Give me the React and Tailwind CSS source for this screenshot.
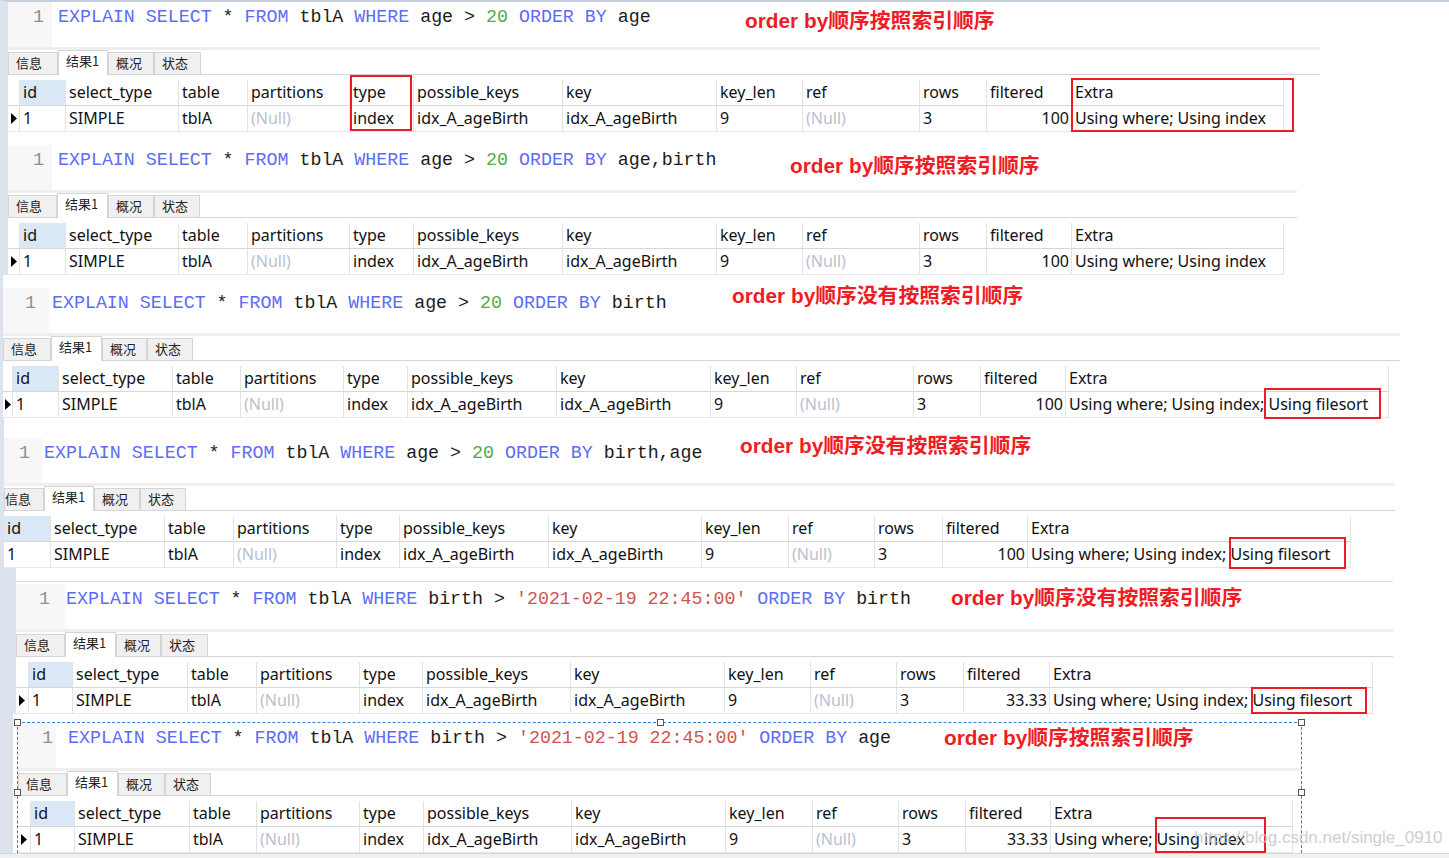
import React from 'react';

const KW = new Set(['EXPLAIN', 'SELECT', 'FROM', 'WHERE', 'ORDER', 'BY']);
const HEAD = ['id', 'select_type', 'table', 'partitions', 'type', 'possible_keys', 'key', 'key_len', 'ref', 'rows', 'filtered', 'Extra'];
const TABS = ['信息', '结果1', '概况', '状态'];

function SqlLine({ text }) {
  const parts = text.match(/'[^']*'|[A-Za-z_]+|\d+|\s+|./g);
  return parts.map((p, i) => {
    let c = 'text-[#1c1c1c]';
    if (KW.has(p)) c = 'text-[#5d6cf6]';
    else if (/^\d+$/.test(p)) c = 'text-[#52a94c]';
    else if (p[0] === "'") c = 'text-[#cf5450]';
    return <span key={i} className={c}>{p}</span>;
  });
}

function Grid({ cols, indicator, filtered, extra }) {
  const w = cols.split(' ');
  const ind = indicator ? w.shift() : null;
  const values = ['1', 'SIMPLE', 'tblA', null, 'index', 'idx_A_ageBirth', 'idx_A_ageBirth', '9', null, '3', filtered, extra];
  const cell = 'shrink-0 border-r border-b border-r-[#e3e3e3] whitespace-nowrap';
  return (
    <div className="font-['Noto_Sans',sans-serif] text-[16px] text-[#111]">
      <div className="flex h-[26px]">
        {ind && <div className={`${ind} ${cell} border-b-[#d6d6d6]`} />}
        {HEAD.map((h, i) => (
          <div key={h} className={`${w[i]} ${cell} border-b-[#d6d6d6] pl-[3px] leading-[25px] ${i === 0 ? 'bg-[#d9e7f6]' : ''}`}>
            {h}
          </div>
        ))}
      </div>
      <div className="flex h-[26px]">
        {ind && (
          <div className={`${ind} ${cell} border-b-[#e8e8e8] flex items-center justify-center`}>
            <svg width="6" height="11" viewBox="0 0 6 11">
              <polygon points="0,0 6,5.5 0,11" fill="#000" />
            </svg>
          </div>
        )}
        {values.map((v, i) => (
          <div
            key={i}
            className={`${w[i]} ${cell} border-b-[#e8e8e8] leading-[25px] ${i === 10 ? 'text-right pr-[2px]' : 'pl-[3px]'} ${v === null ? 'text-[#b8c1d1]' : ''}`}
          >
            {v === null ? '(Null)' : v}
          </div>
        ))}
      </div>
    </div>
  );
}

function Block({ outer, inner = '', gutter, numPr, codeMl, code, note, noteText, tabs, sep, cols, indicator = true, filtered, extra, boxes = [], children }) {
  const tw = tabs.split(' ');
  return (
    <div className={outer}>
      <div className={`relative ${inner}`}>
        <div className="flex h-[45px] font-['Liberation_Mono',monospace] text-[18.3px] leading-[24px]">
          <div className={`${gutter} ${numPr} shrink-0 bg-[#f7f7f7] pt-[3px] text-right text-[#8f8f8f]`}>1</div>
          <div className={`${codeMl} pt-[3px] whitespace-pre`}>
            <SqlLine text={code} />
          </div>
        </div>
        <div className={`${sep} h-[3px] bg-[#efefef]`} />
        <div className={`${sep} flex h-[25px] items-end border-b border-[#d5d5d5] font-['Noto_Sans_CJK_SC',sans-serif] text-[13px] text-[#222]`}>
          {TABS.map((t, i) =>
            i === 1 ? (
              <div key={t} className={`${tw[i]} -mb-px h-[25px] shrink-0 border-x border-t border-[#d5d5d5] bg-white pl-[7px] leading-[20px]`}>
                {t}
              </div>
            ) : (
              <div key={t} className={`${tw[i]} h-[22px] shrink-0 overflow-hidden border-x border-t border-[#d5d5d5] bg-[#f0f0f0] ${i === 0 && !indicator ? 'pl-0' : 'pl-[7px]'} leading-[19px]`}>
                {t}
              </div>
            )
          )}
        </div>
        <div className="h-[5px]" />
        <Grid cols={cols} indicator={indicator} filtered={filtered} extra={extra} />
        <div className={`absolute ${note} whitespace-nowrap font-['Liberation_Sans','Noto_Sans_CJK_SC',sans-serif] text-[20.8px] font-bold leading-[28px] text-[#ef1c25]`}>
          {noteText}
        </div>
        {boxes.map((b) => (
          <div key={b} className={`absolute ${b} border-2 border-[#ec1c24]`} />
        ))}
        {children}
      </div>
    </div>
  );
}

const Q1 = 'EXPLAIN SELECT * FROM tblA WHERE age > 20 ORDER BY ';
const Q2 = "EXPLAIN SELECT * FROM tblA WHERE birth > '2021-02-19 22:45:00' ORDER BY ";
const YES = 'order by顺序按照索引顺序';
const NO = 'order by顺序没有按照索引顺序';
const E2 = 'Using where; Using index';
const E3 = 'Using where; Using index; Using filesort';

function Handle({ pos }) {
  return <div className={`absolute ${pos} h-[7px] w-[7px] border border-[#555] bg-white`} />;
}

export default function App() {
  return (
    <div className="h-[858px] w-[1449px] overflow-hidden bg-white">
      <Block
        outer="border-l-[8px] border-t-2 border-l-[#dce3ec] border-t-[#c5cedb]"
        gutter="w-[44px]"
        numPr="pr-[8px]"
        codeMl="ml-[6px]"
        code={Q1 + 'age'}
        note="left-[737px] top-[5px]"
        noteText={YES}
        tabs="w-[50px] w-[50px] w-[46px] w-[47px]"
        sep="w-[1312px]"
        cols="w-[12px] w-[46px] w-[113px] w-[69px] w-[102px] w-[64px] w-[149px] w-[154px] w-[86px] w-[117px] w-[67px] w-[85px] w-[212px]"
        filtered="100"
        extra={E2}
        boxes={['left-[342px] top-[73px] w-[62px] h-[56px]', 'left-[1063px] top-[76px] w-[223px] h-[54px]']}
      />
      <Block
        outer="border-l-[8px] border-l-[#dce3ec] pt-[13px]"
        gutter="w-[44px]"
        numPr="pr-[8px]"
        codeMl="ml-[6px]"
        code={Q1 + 'age,birth'}
        note="left-[782px] top-[7px]"
        noteText={YES}
        tabs="w-[49px] w-[51px] w-[46px] w-[46px]"
        sep="w-[1289px]"
        cols="w-[12px] w-[46px] w-[113px] w-[69px] w-[102px] w-[64px] w-[149px] w-[154px] w-[86px] w-[117px] w-[67px] w-[85px] w-[212px]"
        filtered="100"
        extra={E2}
      />
      <Block
        outer="border-l-[3px] border-l-[#dce3ec] pt-[13px]"
        gutter="w-[46px]"
        numPr="pr-[13px]"
        codeMl="ml-[3px]"
        code={Q1 + 'birth'}
        note="left-[729px] top-[-6px]"
        noteText={NO}
        tabs="w-[48px] w-[51px] w-[45px] w-[46px]"
        sep="w-[1397px]"
        cols="w-[10px] w-[46px] w-[114px] w-[68px] w-[103px] w-[64px] w-[149px] w-[154px] w-[86px] w-[117px] w-[67px] w-[85px] w-[323px]"
        filtered="100"
        extra={E3}
        boxes={['left-[1261px] top-[100px] w-[117px] h-[31px]']}
      />
      <Block
        outer="border-l-[4px] border-l-[#dce3ec] pt-[20px]"
        gutter="w-[38px]"
        numPr="pr-[12px]"
        codeMl="ml-[2px]"
        code={Q1 + 'birth,age'}
        note="left-[736px] top-[-6px]"
        noteText={NO}
        tabs="w-[40px] w-[50px] w-[46px] w-[46px]"
        sep="w-[1391px]"
        indicator={false}
        cols="w-[47px] w-[114px] w-[69px] w-[103px] w-[63px] w-[149px] w-[153px] w-[87px] w-[86px] w-[68px] w-[85px] w-[323px]"
        filtered="100"
        extra={E3}
        boxes={['left-[1225px] top-[99px] w-[117px] h-[32px]']}
      />
      <Block
        outer="border-l-[16px] border-l-[#dce3ec] pt-[13px]"
        inner="w-[1377px] border-t border-[#dedede] pt-[2px]"
        gutter="w-[49px]"
        numPr="pr-[15px]"
        codeMl="ml-[1px]"
        code={Q2 + 'birth'}
        note="left-[935px] top-[2px]"
        noteText={NO}
        tabs="w-[49px] w-[51px] w-[45px] w-[47px]"
        sep="w-[1377px]"
        cols="w-[13px] w-[44px] w-[115px] w-[69px] w-[103px] w-[63px] w-[148px] w-[154px] w-[86px] w-[86px] w-[67px] w-[86px] w-[323px]"
        filtered="33.33"
        extra={E3}
        boxes={['left-[1235px] top-[105px] w-[116px] h-[27px]']}
      />
      <Block
        outer="border-l-[13px] border-l-[#dce3ec] pt-[8px]"
        inner="ml-[4px] w-[1285px] border-x border-t border-dashed border-[#2f80d4]"
        gutter="w-[38px]"
        numPr="pr-[3px]"
        codeMl="ml-[12px]"
        code={Q2 + 'age'}
        note="left-[926px] top-[1px]"
        noteText={YES}
        tabs="w-[49px] w-[51px] w-[47px] w-[46px]"
        sep="w-[1283px]"
        cols="w-[13px] w-[44px] w-[115px] w-[67px] w-[103px] w-[64px] w-[148px] w-[154px] w-[87px] w-[86px] w-[67px] w-[85px] w-[242px]"
        filtered="33.33"
        extra={E2}
        boxes={['left-[1137px] top-[94px] w-[111px] h-[36px]']}
      >
        <Handle pos="left-[-4px] top-[-4px]" />
        <Handle pos="left-[639px] top-[-4px]" />
        <Handle pos="left-[1280px] top-[-4px]" />
        <Handle pos="left-[-4px] top-[66px]" />
        <Handle pos="left-[1280px] top-[66px]" />
        <div className="absolute left-[1176px] top-[104px] z-10 whitespace-nowrap font-['Liberation_Sans',sans-serif] text-[17px] leading-[22px] text-[#c4c4c4] opacity-80">
          https://blog.csdn.net/single_0910
        </div>
      </Block>
      <div className="h-[5px] border-t border-[#d7d7d7] bg-[#f0f0f0]" />
    </div>
  );
}
